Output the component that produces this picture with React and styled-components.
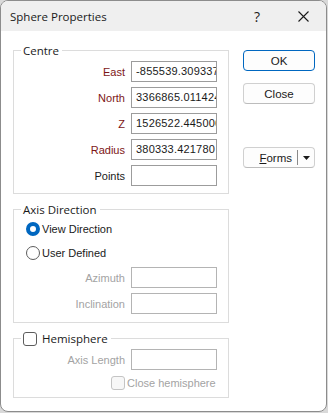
import React from "react";
import styled, { createGlobalStyle } from "styled-components";

const GlobalStyle = createGlobalStyle`
  html, body {
    margin: 0;
    padding: 0;
    background: #d9d9d9;
  }
  body {
    font-family: "Liberation Sans", Arial, sans-serif;
  }
`;

const Window = styled.div`
  box-sizing: border-box;
  width: 327px;
  height: 412px;
  border: 1px solid #8c8c8c;
  border-radius: 8px;
  overflow: hidden;
  background: #ffffff;
  display: flex;
  flex-direction: column;
`;

const TitleBar = styled.div`
  height: 30px;
  background: #efefef;
  display: flex;
  align-items: center;
  padding-left: 9px;
  font-family: "Open Sans", "Liberation Sans", sans-serif;
  font-size: 11.5px;
  color: #1a1a1a;
`;

const Title = styled.div`
  flex: 1;
`;

const TitleButton = styled.div`
  width: 46px;
  height: 30px;
  display: flex;
  align-items: center;
  justify-content: center;
  font-size: 14px;
  color: #1a1a1a;
`;

const Body = styled.div`
  flex: 1;
  display: flex;
  padding: 19px 0 0 12px;
  gap: 14px;
`;

const LeftColumn = styled.div`
  display: flex;
  flex-direction: column;
  gap: 15px;
  width: 216px;
`;

const Group = styled.div`
  position: relative;
  box-sizing: border-box;
  border: 1px solid #dcdcdc;
  padding: ${(p) => p.$pad || "10px 11px 7px 0"};
  display: flex;
  flex-direction: column;
  gap: ${(p) => p.$gap || "5px"};
`;

const Legend = styled.div`
  position: absolute;
  top: -8px;
  left: 7px;
  padding: 0 3px 0 2px;
  background: #ffffff;
  font-family: "Open Sans", "Liberation Sans", sans-serif;
  font-size: 11.5px;
  line-height: 15px;
  color: #1a1a1a;
  display: flex;
  align-items: center;
  gap: 5px;
`;

const Row = styled.div`
  display: flex;
  align-items: center;
  justify-content: flex-end;
  gap: 6px;
  height: 21px;
  margin-top: ${(p) => p.$mt || "0"};
`;

const Label = styled.span`
  font-size: 11px;
  color: ${(p) => (p.$disabled ? "#a3a3a3" : p.$required ? "#7d1616" : "#1a1a1a")};
`;

const Field = styled.div`
  box-sizing: border-box;
  width: 86px;
  height: 21px;
  border: 1px solid ${(p) => (p.$disabled ? "#b4b4b4" : "#9c9c9c")};
  background: #ffffff;
  padding: 0 0 0 4px;
  font-size: 11px;
  line-height: 19px;
  letter-spacing: 0.2px;
  color: #1a1a1a;
  overflow: hidden;
  white-space: nowrap;
`;

const OptionRow = styled.div`
  display: flex;
  align-items: center;
  gap: 2px;
  height: 20px;
  white-space: nowrap;
  padding-left: ${(p) => p.$indent || "12px"};
  font-size: 11px;
  color: ${(p) => (p.$disabled ? "#a3a3a3" : "#1a1a1a")};
`;

const Radio = styled.span`
  box-sizing: border-box;
  width: 14px;
  height: 14px;
  border-radius: 50%;
  border: ${(p) => (p.$checked ? "4px solid #0067c0" : "1px solid #5d5d5d")};
  background: #ffffff;
  flex-shrink: 0;
`;

const Check = styled.span`
  box-sizing: border-box;
  width: 14px;
  height: 14px;
  border-radius: 3px;
  border: 1px solid ${(p) => (p.$disabled ? "#c4c4c4" : "#5d5d5d")};
  background: ${(p) => (p.$disabled ? "#f7f7f7" : "#ffffff")};
  flex-shrink: 0;
`;

const RightColumn = styled.div`
  display: flex;
  flex-direction: column;
  width: 72px;
`;

const Button = styled.div`
  box-sizing: border-box;
  height: 21px;
  margin-bottom: ${(p) => p.$mb || "0"};
  border: 1px solid ${(p) => (p.$primary ? "#0067c0" : "#d0d0d0")};
  border-bottom-color: ${(p) => (p.$primary ? "#0067c0" : "#bcbcbc")};
  border-radius: 4px;
  background: #fdfdfd;
  display: flex;
  align-items: center;
  justify-content: center;
  font-size: 11.5px;
  color: #1a1a1a;
`;

const SplitText = styled.span`
  flex: 1;
  text-align: right;
  padding-right: 5px;
  u {
    text-decoration: underline;
    text-underline-offset: 1px;
  }
`;

const SplitArrow = styled.span`
  width: 16px;
  height: 15px;
  border-left: 1px solid #8a8a8a;
  display: flex;
  align-items: center;
  justify-content: center;
`;

const Spacer = styled.div`
  height: ${(p) => p.$h};
`;

const centre = [
  { label: "East", value: "-855539.309337", required: true },
  { label: "North", value: "3366865.011424", required: true },
  { label: "Z", value: "1526522.445006", required: true },
  { label: "Radius", value: "380333.421780", required: true },
  { label: "Points", value: "" },
];

export default function App() {
  return (
    <>
      <GlobalStyle />
      <Window>
        <TitleBar>
          <Title>Sphere Properties</Title>
          <TitleButton>?</TitleButton>
          <TitleButton>
            <svg width="11" height="11" viewBox="0 0 11 11">
              <path d="M0.5 0.5 L10.5 10.5 M10.5 0.5 L0.5 10.5" stroke="#1a1a1a" strokeWidth="1.1" />
            </svg>
          </TitleButton>
        </TitleBar>
        <Body>
          <LeftColumn>
            <Group>
              <Legend>Centre</Legend>
              {centre.map((r) => (
                <Row key={r.label}>
                  <Label $required={r.required}>{r.label}</Label>
                  <Field>{r.value}</Field>
                </Row>
              ))}
            </Group>

            <Group $pad="9px 11px 8px 0" $gap="4px">
              <Legend>Axis Direction</Legend>
              <OptionRow>
                <Radio $checked />
                View Direction
              </OptionRow>
              <OptionRow>
                <Radio />
                User Defined
              </OptionRow>
              <Row>
                <Label $disabled>Azimuth</Label>
                <Field $disabled />
              </Row>
              <Row $mt="1px">
                <Label $disabled>Inclination</Label>
                <Field $disabled />
              </Row>
            </Group>

            <Group $pad="10px 11px 4px 0" $gap="3px">
              <Legend>
                <Check />
                Hemisphere
              </Legend>
              <Row>
                <Label $disabled>Axis Length</Label>
                <Field $disabled />
              </Row>
              <OptionRow $indent="97px" $disabled>
                <Check $disabled />
                Close hemisphere
              </OptionRow>
            </Group>
          </LeftColumn>

          <RightColumn>
            <Button $primary $mb="12px">OK</Button>
            <Button>Close</Button>
            <Spacer $h="43px" />
            <Button>
              <SplitText>
                <u>F</u>orms
              </SplitText>
              <SplitArrow>
                <svg width="7" height="4" viewBox="0 0 7 4">
                  <path d="M0 0 L7 0 L3.5 4 Z" fill="#1a1a1a" />
                </svg>
              </SplitArrow>
            </Button>
          </RightColumn>
        </Body>
      </Window>
    </>
  );
}
